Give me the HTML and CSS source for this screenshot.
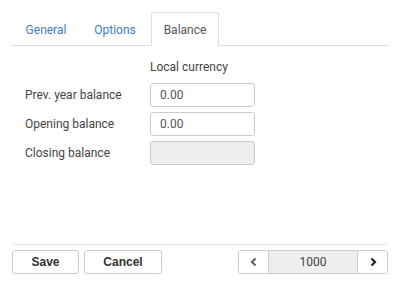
FILE: index.html
```html
<!DOCTYPE html>
<html lang="en">
<head>
  <meta charset="UTF-8">
  <title>Balance</title>
  <link rel="stylesheet" href="styles.css">
</head>
<body>
  <div class="page">
    <ul class="tabs">
      <li class="tab">General</li>
      <li class="tab">Options</li>
      <li class="tab active">Balance</li>
    </ul>

    <div class="form">
      <div class="form-head">Local currency</div>
      <div class="form-row">
        <label>Prev. year balance</label>
        <div class="field">0.00</div>
      </div>
      <div class="form-row">
        <label>Opening balance</label>
        <div class="field">0.00</div>
      </div>
      <div class="form-row">
        <label>Closing balance</label>
        <div class="field disabled"></div>
      </div>
    </div>

    <div class="footer">
      <button class="btn save">Save</button>
      <button class="btn cancel">Cancel</button>
      <div class="pager">
        <button class="pager-btn">
          <svg width="10" height="10" viewBox="0 0 10 10"><path d="M6.5 1.5 3 5l3.5 3.5" fill="none" stroke="#666" stroke-width="2.2"/></svg>
        </button>
        <div class="pager-num">1000</div>
        <button class="pager-btn">
          <svg width="10" height="10" viewBox="0 0 10 10"><path d="M3.5 1.5 7 5 3.5 8.5" fill="none" stroke="#222" stroke-width="2.2"/></svg>
        </button>
      </div>
    </div>
  </div>
</body>
</html>
```

FILE: styles.css
```css
* {
  margin: 0;
  padding: 0;
  box-sizing: border-box;
}

body {
  font-family: Roboto, "Liberation Sans", sans-serif;
  font-size: 12px;
  color: #444;
  background: #fff;
}

.page {
  display: flex;
  flex-direction: column;
  height: 289px;
  padding: 12px 12px 0;
}

.tabs {
  display: flex;
  list-style: none;
  border-bottom: 1px solid #ddd;
  height: 34px;
}

.tab {
  width: 68px;
  height: 34px;
  padding-top: 2px;
  line-height: 32px;
  text-align: center;
  color: #3f7cc2;
  margin-right: 1px;
}

.tab.active {
  color: #555;
  border: 1px solid #ddd;
  border-bottom-color: #fff;
  border-radius: 3px 3px 0 0;
  background: #fff;
  margin-left: 1px;
  padding-top: 1px;
}

.form {
  flex: 1;
  padding: 14px 0 0 13px;
}

.form-head {
  margin-left: 125px;
  height: 23px;
  line-height: 14px;
  color: #444;
}

.form-row {
  display: flex;
  align-items: center;
  height: 24px;
  margin-bottom: 5px;
}

.form-row label {
  width: 125px;
  color: #444;
}

.field {
  width: 105px;
  height: 24px;
  line-height: 22px;
  border: 1px solid #ccc;
  border-radius: 3px;
  padding: 0 9px;
  color: #555;
}

.field.disabled {
  background: #eee;
}

.footer {
  display: flex;
  align-items: flex-start;
  border-top: 1px solid #e8e8e8;
  height: 45px;
  padding-top: 5px;
}

.btn {
  height: 24px;
  border: 1px solid #ccc;
  border-radius: 3px;
  background: #fff;
  font-family: "Liberation Sans", Arial, sans-serif;
  font-weight: bold;
  font-size: 12px;
  color: #333;
}

.save {
  width: 67px;
}

.cancel {
  width: 78px;
  margin-left: 5px;
}

.pager {
  display: flex;
  margin-left: auto;
  height: 24px;
  border: 1px solid #ccc;
  border-radius: 3px;
  overflow: hidden;
}

.pager-btn {
  width: 29px;
  border: 0;
  background: #fff;
  display: flex;
  align-items: center;
  justify-content: center;
}

.pager-num {
  width: 90px;
  background: #eee;
  border-left: 1px solid #ccc;
  border-right: 1px solid #ccc;
  text-align: center;
  line-height: 22px;
  color: #444;
}
```
